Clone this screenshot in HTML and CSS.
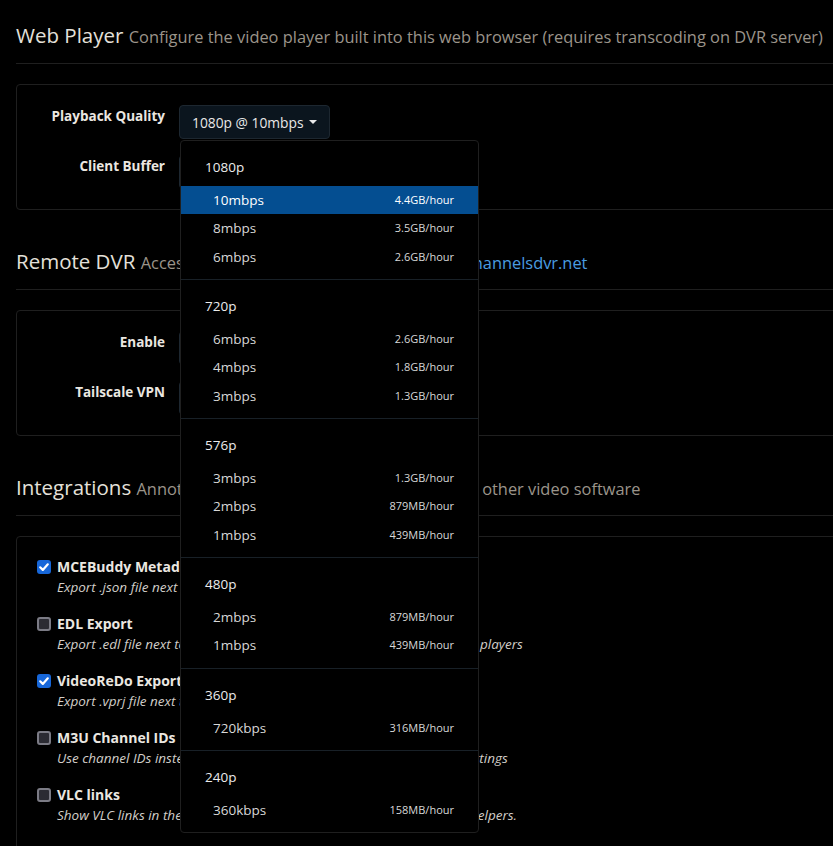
FILE: index.html
```html
<!DOCTYPE html>
<html lang="en">

<head>
    <meta charset="UTF-8">
    <meta name="viewport" content="width=device-width, initial-scale=1.0">
    <title>Settings</title>
    <link rel="stylesheet" href="styles.css">
</head>

<body>
    <div class="page">

        <!-- Web Player -->
        <section class="section">
            <h2 class="section-title">Web Player <small>Configure the video player built into this web browser (requires transcoding on DVR server)</small></h2>
            <div class="panel">
                <div class="form-row">
                    <label class="form-label">Playback Quality</label>
                    <div class="dropdown">
                        <button class="select-btn">1080p @ 10mbps <span class="caret"></span></button>

                        <div class="dropdown-menu">
                            <div class="dropdown-group">
                                <div class="dropdown-header">1080p</div>
                                <a class="dropdown-item active" href="#"><span>10mbps</span><small>4.4GB/hour</small></a>
                                <a class="dropdown-item" href="#"><span>8mbps</span><small>3.5GB/hour</small></a>
                                <a class="dropdown-item" href="#"><span>6mbps</span><small>2.6GB/hour</small></a>
                            </div>
                            <div class="dropdown-divider"></div>
                            <div class="dropdown-group">
                                <div class="dropdown-header">720p</div>
                                <a class="dropdown-item" href="#"><span>6mbps</span><small>2.6GB/hour</small></a>
                                <a class="dropdown-item" href="#"><span>4mbps</span><small>1.8GB/hour</small></a>
                                <a class="dropdown-item" href="#"><span>3mbps</span><small>1.3GB/hour</small></a>
                            </div>
                            <div class="dropdown-divider"></div>
                            <div class="dropdown-group">
                                <div class="dropdown-header">576p</div>
                                <a class="dropdown-item" href="#"><span>3mbps</span><small>1.3GB/hour</small></a>
                                <a class="dropdown-item" href="#"><span>2mbps</span><small>879MB/hour</small></a>
                                <a class="dropdown-item" href="#"><span>1mbps</span><small>439MB/hour</small></a>
                            </div>
                            <div class="dropdown-divider"></div>
                            <div class="dropdown-group">
                                <div class="dropdown-header">480p</div>
                                <a class="dropdown-item" href="#"><span>2mbps</span><small>879MB/hour</small></a>
                                <a class="dropdown-item" href="#"><span>1mbps</span><small>439MB/hour</small></a>
                            </div>
                            <div class="dropdown-divider"></div>
                            <div class="dropdown-group">
                                <div class="dropdown-header">360p</div>
                                <a class="dropdown-item" href="#"><span>720kbps</span><small>316MB/hour</small></a>
                            </div>
                            <div class="dropdown-divider"></div>
                            <div class="dropdown-group">
                                <div class="dropdown-header">240p</div>
                                <a class="dropdown-item" href="#"><span>360kbps</span><small>158MB/hour</small></a>
                            </div>
                        </div>
                    </div>
                </div>
                <div class="form-row">
                    <label class="form-label">Client Buffer</label>
                    <button class="select-btn">Default <span class="caret"></span></button>
                </div>
            </div>
        </section>

        <!-- Remote DVR -->
        <section class="section">
            <h2 class="section-title">Remote DVR <small>Access your DVR from anywhere using <a href="#">my.channelsdvr.net</a></small></h2>
            <div class="panel">
                <div class="form-row">
                    <label class="form-label">Enable</label>
                    <button class="select-btn">Disabled <span class="caret"></span></button>
                </div>
                <div class="form-row">
                    <label class="form-label">Tailscale VPN</label>
                    <button class="select-btn">Disabled <span class="caret"></span></button>
                </div>
            </div>
        </section>

        <!-- Integrations -->
        <section class="section">
            <h2 class="section-title">Integrations <small>Annotate recordings and export metadata to other video software</small></h2>
            <div class="panel panel-checks">
                <div class="check">
                    <span class="check-box checked"><svg viewBox="0 0 14 14" width="14" height="14"><path d="M3.2 7.3l2.6 2.6 5-5.6" fill="none" stroke="#fff" stroke-width="2.2" stroke-linecap="round" stroke-linejoin="round"/></svg></span>
                    <div>
                        <div class="check-label">MCEBuddy Metadata</div>
                        <div class="check-help">Export .json file next to recordings</div>
                    </div>
                </div>
                <div class="check">
                    <span class="check-box"></span>
                    <div>
                        <div class="check-label">EDL Export</div>
                        <div class="check-help">Export .edl file next to recordings to skip commercials in external video players</div>
                    </div>
                </div>
                <div class="check">
                    <span class="check-box checked"><svg viewBox="0 0 14 14" width="14" height="14"><path d="M3.2 7.3l2.6 2.6 5-5.6" fill="none" stroke="#fff" stroke-width="2.2" stroke-linecap="round" stroke-linejoin="round"/></svg></span>
                    <div>
                        <div class="check-label">VideoReDo Export</div>
                        <div class="check-help">Export .vprj file next to recordings</div>
                    </div>
                </div>
                <div class="check">
                    <span class="check-box"></span>
                    <div>
                        <div class="check-label">M3U Channel IDs</div>
                        <div class="check-help">Use channel IDs instead of channel numbers from M3U source in UI settings</div>
                    </div>
                </div>
                <div class="check">
                    <span class="check-box"></span>
                    <div>
                        <div class="check-label">VLC links</div>
                        <div class="check-help">Show VLC links in the web UIs for use with the vlc:// protocol and URL helpers.</div>
                    </div>
                </div>
            </div>
        </section>

    </div>
</body>

</html>
```

FILE: styles.css
```css
/* 页面基础 */
html,
body {
    margin: 0;
    overflow: hidden;
    background-color: #000;
}

body {
    font-family: "Open Sans", "Noto Sans", sans-serif;
    color: #e6e2dc;
}

.page {
    width: 860px;
    padding: 20px 0 0 16px;
}

/* 区块标题 */
.section {
    margin-bottom: 36px;
}

.section-title {
    margin: 0 0 20px;
    padding-bottom: 11px;
    border-bottom: 1px solid #1f1f1f;
    font-size: 20.5px;
    font-weight: 400;
    line-height: 30px;
    color: #e4e0da;
    white-space: nowrap;
}

.section-title small {
    font-size: 16.4px;
    color: #9b948a;
}

.section-title a {
    color: #4a9de0;
    text-decoration: none;
}

/* 面板 */
.panel {
    border: 1px solid #1f1f1f;
    border-radius: 4px;
    padding: 20px 0;
    display: flex;
    flex-direction: column;
    gap: 16px;
}

.form-row {
    display: flex;
    align-items: flex-start;
    gap: 14px;
}

.form-label {
    width: 148px;
    text-align: right;
    font-size: 13.5px;
    font-weight: 700;
    line-height: 20px;
    padding-top: 1px;
    color: #ebe7e1;
}

/* 下拉按钮 */
.dropdown {
    position: relative;
}

.select-btn {
    height: 34px;
    padding: 0 12px;
    background-color: #0b151e;
    border: 1px solid #1d2730;
    border-radius: 4px;
    color: #e8e8e8;
    font-family: inherit;
    font-size: 13.8px;
    display: flex;
    align-items: center;
    gap: 5px;
}

.caret {
    width: 0;
    height: 0;
    border-left: 4px solid transparent;
    border-right: 4px solid transparent;
    border-top: 4px solid #e8e8e8;
}

/* 下拉菜单，盖在页面上 */
.dropdown-menu {
    position: absolute;
    top: 35px;
    left: 1px;
    z-index: 10;
    width: 297px;
    padding: 8px 0;
    background-color: #000;
    border: 1px solid #1f1f1f;
    border-radius: 4px;
}

.dropdown-header {
    padding: 8px 24px;
    line-height: 21px;
    font-size: 13.5px;
    color: #ececec;
}

.dropdown-item {
    display: flex;
    justify-content: space-between;
    align-items: center;
    padding: 4px 24px 4px 32px;
    line-height: 20.33px;
    font-size: 13.5px;
    color: #d8d8d8;
    text-decoration: none;
}

.dropdown-item small {
    font-size: 11px;
}

.dropdown-item.active {
    background-color: #044e91;
    color: #fff;
}

.dropdown-divider {
    margin: 8px 0;
    border-top: 1px solid #182027;
}

/* 复选框列表 */
.panel-checks {
    padding: 20px 0 0 20px;
    gap: 17px;
    height: 400px;
}

.check {
    display: flex;
    align-items: flex-start;
    gap: 6px;
}

.check-box {
    box-sizing: border-box;
    width: 14px;
    height: 14px;
    margin-top: 3px;
    border: 2px solid #7b7b85;
    border-radius: 3px;
    background-color: #2b2b33;
    display: flex;
}

.check-box.checked {
    border: none;
    background-color: #1767d9;
}

.check-label {
    font-size: 14px;
    font-weight: 700;
    line-height: 20px;
    color: #ebe7e1;
}

.check-help {
    font-size: 13.5px;
    font-style: italic;
    line-height: 20px;
    color: #d2cec8;
}
```
